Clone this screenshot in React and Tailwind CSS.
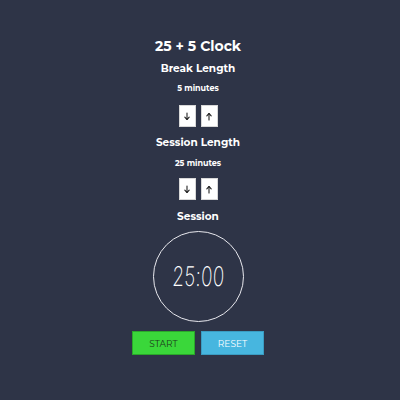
export default function App() {
  const font = { fontFamily: '"Montserrat", Inter, "Noto Sans", sans-serif' };
  const Arrow = ({ up }) => (
    <svg width="8" height="9" viewBox="0 0 8 9" fill="none" stroke="#222" strokeWidth="1.1" strokeLinecap="round" strokeLinejoin="round">
      {up ? (
        <>
          <path d="M4 8V1.5" />
          <path d="M1.8 3.8L4 1.5L6.2 3.8" />
        </>
      ) : (
        <>
          <path d="M4 1V7.5" />
          <path d="M1.8 5.2L4 7.5L6.2 5.2" />
        </>
      )}
    </svg>
  );
  const Btns = () => (
    <div className="flex gap-[5px]">
      <button className="w-[17px] h-[22px] bg-white flex items-center justify-center border border-[#d8d8d8]">
        <Arrow />
      </button>
      <button className="w-[17px] h-[22px] bg-white flex items-center justify-center border border-[#d8d8d8]">
        <Arrow up />
      </button>
    </div>
  );
  return (
    <div className="w-[400px] h-[400px] bg-[#2e3447]">
      <div className="w-[396px] text-white flex flex-col items-center pt-[38px]" style={font}>
        <div className="text-[14px] font-bold leading-[16px]">25 + 5 Clock</div>
        <div className="mt-[8px] text-[10.5px] font-bold leading-[14px]">Break Length</div>
        <div className="mt-[7px] text-[8px] font-bold leading-[10px]">5 minutes</div>
        <div className="mt-[12px]"><Btns /></div>
        <div className="mt-[9px] text-[10.5px] font-bold leading-[14px]">Session Length</div>
        <div className="mt-[8px] text-[8px] font-bold leading-[10px]">25 minutes</div>
        <div className="mt-[10px]"><Btns /></div>
        <div className="mt-[10px] text-[10.5px] font-bold leading-[14px]">Session</div>
        <div className="mt-[7px] w-[91px] h-[91px] rounded-full border border-[#e8e8ee] flex items-center justify-center">
          <span
            className="text-[27px] font-extralight leading-none text-white scale-x-[0.7] tracking-[0.5px] -skew-x-3"
            style={{ fontFamily: 'Inter, "DejaVu Sans", sans-serif' }}
          >
            25:00
          </span>
        </div>
        <div className="mt-[9px] flex gap-[6px]">
          <button className="w-[63px] h-[24px] bg-[#3ad73a] border border-[#2aa82a] text-[#1d3b1d] text-[9px] leading-none">START</button>
          <button className="w-[63px] h-[24px] bg-[#47b6df] border border-[#3a9cc2] text-white text-[9px] leading-none">RESET</button>
        </div>
      </div>
    </div>
  );
}
